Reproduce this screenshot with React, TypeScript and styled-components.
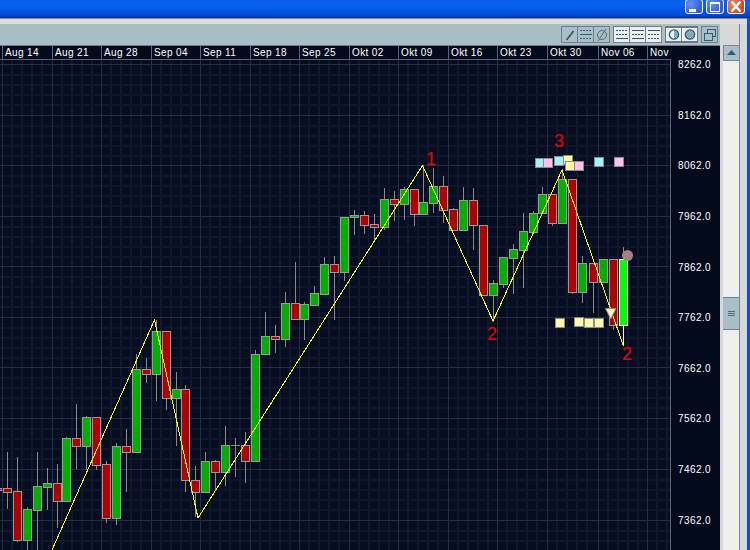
import React from "react";
import styled, { createGlobalStyle } from "styled-components";

const Global = createGlobalStyle`
  html, body { margin: 0; padding: 0; background: #dcdcdc; overflow: hidden; }
  * { box-sizing: border-box; }
`;

const Page = styled.div`
  width: 750px;
  height: 550px;
  display: flex;
  flex-direction: column;
  overflow: hidden;
  font-family: "Liberation Sans", Arial, sans-serif;
`;

const TitleBar = styled.div`
  height: 18px;
  flex: none;
  display: flex;
  justify-content: flex-end;
  align-items: flex-start;
  gap: 3px;
  padding-right: 5px;
  background: linear-gradient(180deg, #0a5ee8 0%, #0462f0 30%, #0050d8 75%, #0048c8 88%, #00309a 100%);
`;

const WinButton = styled.div<{ $close?: boolean }>`
  width: 18px;
  height: 15px;
  margin-top: -1px;
  border: 1px solid #fff;
  border-radius: 3px;
  display: flex;
  align-items: center;
  justify-content: center;
  background: ${(p) =>
    p.$close
      ? "radial-gradient(circle at 30% 30%, #ee8a60, #d8481c 70%)"
      : "radial-gradient(circle at 30% 30%, #6a90f0, #2f5fe0 70%)"};
`;

const Frame = styled.div`
  flex: 1;
  min-height: 0;
  display: flex;
  border-right: 3px solid #0a50e0;
  padding-top: 6px;
  background: linear-gradient(180deg, #8a8a8a 0, #8a8a8a 1px, #dfdcdc 1px, #dfdcdc 6px, #d8d8d8 6px);
`;

const MainColumn = styled.div`
  width: 720px;
  flex: none;
  display: flex;
  flex-direction: column;
`;

const Toolbar = styled.div`
  height: 22px;
  flex: none;
  display: flex;
  justify-content: flex-end;
  align-items: flex-start;
  gap: 3px;
  padding: 2px 2px 0 0;
  background: #a9bfc5;
  border-bottom: 1px solid #6f7d8c;
`;

const ToolGroup = styled.div<{ $thick?: boolean; $w: number }>`
  display: flex;
  width: ${(p) => p.$w}px;
  height: 17px;
  border: ${(p) => (p.$thick ? "2px solid #6a7888" : "1px solid #6f7d8c")};
  ${(p) => p.$thick && "border-left-width: 1px; border-right-width: 1px;"}
`;

const ToolButton = styled.div<{ $lit?: boolean }>`
  flex: 1;
  min-width: 0;
  height: 100%;
  display: flex;
  align-items: center;
  justify-content: center;
  background: ${(p) => (p.$lit ? "#eeeeee" : "#a9bfc5")};
  border-left: 1px solid #6f7d8c;
  &:first-child { border-left: 0; }
`;

const DateAxis = styled.div`
  height: 13px;
  flex: none;
  display: flex;
  background: #030a1c;
  padding-left: 2px;
  overflow: hidden;
`;

const DateCell = styled.div<{ $w: number }>`
  width: ${(p) => p.$w}px;
  flex: none;
  border-left: 1px solid #5a6678;
  padding-left: 2px;
  color: #fff;
  font-size: 10px;
  line-height: 13px;
  letter-spacing: 0.35px;
  white-space: nowrap;
`;

const ChartRow = styled.div`
  flex: 1;
  min-height: 0;
  display: flex;
  background: #020a1c;
`;

const ChartBox = styled.div`
  width: 671px;
  flex: none;
  border-top: 1px solid #5a6678;
  border-right: 1px solid #5a6678;
  display: flex;
  overflow: hidden;
`;

const PriceAxis = styled.div`
  flex: 1;
  display: flex;
  flex-direction: column;
  padding: 0 0 0 7px;
  margin-right: 1px;
  color: #fff;
  font-size: 10px;
  letter-spacing: 0.42px;
`;

const PriceLabel = styled.div`
  height: 50.65px;
  flex: none;
  line-height: 11px;
  white-space: nowrap;
`;

const ScrollColumn = styled.div`
  width: 17px;
  flex: none;
  margin-left: 3px;
  padding-top: 21px;
  display: flex;
  flex-direction: column;
  border-right: 1px solid #7a8896;
`;

const ScrollArrow = styled.div`
  height: 16px;
  flex: none;
  background: #a9bfc5;
  border: 1px solid #7a8896;
  border-right: 0;
  display: flex;
  align-items: center;
  justify-content: center;
`;

const ScrollTrack = styled.div`
  flex: 1;
  background: #efefef;
  padding-top: 236px;
`;

const ScrollThumb = styled.div`
  height: 33px;
  background: #a9bfc5;
  border-top: 1px solid #6f7d8c;
  border-bottom: 1px solid #6f7d8c;
  display: flex;
  flex-direction: column;
  align-items: center;
  justify-content: center;
  gap: 1px;
`;

const GripLine = styled.div`
  width: 7px;
  height: 1px;
  background: #4f6a80;
`;

type C = [number, number, number, number, number, "r" | "g" | "b"];
const candles: C[] = [
  [-3, 480, 500, 488, 490, "r"],
  [7, 452, 509, 488, 492, "r"],
  [17, 457, 542, 491, 540, "r"],
  [27, 507, 560, 509, 540, "g"],
  [37, 452, 560, 486, 510, "g"],
  [47, 468, 510, 483, 487, "g"],
  [57, 464, 528, 483, 501, "r"],
  [66, 437, 501, 438, 501, "g"],
  [76, 404, 469, 438, 446, "r"],
  [86, 416, 470, 417, 446, "g"],
  [96, 417, 470, 417, 465, "r"],
  [106, 461, 523, 464, 518, "r"],
  [116, 443, 525, 446, 518, "g"],
  [126, 429, 492, 446, 452, "r"],
  [136, 354, 452, 369, 452, "g"],
  [146, 358, 383, 369, 374, "r"],
  [156, 320, 401, 331, 374, "g"],
  [166, 331, 410, 331, 398, "r"],
  [176, 372, 446, 389, 398, "g"],
  [185, 385, 492, 389, 480, "r"],
  [195, 466, 517, 480, 492, "r"],
  [205, 452, 492, 461, 492, "g"],
  [215, 460, 490, 461, 472, "r"],
  [225, 426, 486, 445, 472, "g"],
  [245, 432, 483, 445, 461, "r"],
  [255, 350, 461, 354, 461, "g"],
  [265, 312, 354, 336, 354, "g"],
  [275, 325, 353, 336, 339, "r"],
  [285, 292, 347, 303, 339, "g"],
  [295, 262, 320, 303, 319, "r"],
  [304, 302, 340, 304, 319, "g"],
  [314, 286, 305, 293, 305, "g"],
  [324, 257, 294, 264, 294, "g"],
  [334, 256, 320, 264, 272, "r"],
  [344, 217, 281, 217, 272, "g"],
  [354, 210, 235, 215, 217, "g"],
  [364, 211, 234, 215, 225, "r"],
  [374, 214, 240, 224, 227, "r"],
  [384, 188, 230, 199, 227, "g"],
  [394, 191, 221, 199, 204, "r"],
  [404, 187, 220, 189, 204, "g"],
  [414, 189, 226, 189, 214, "r"],
  [423, 165, 214, 202, 214, "g"],
  [433, 168, 213, 186, 203, "g"],
  [443, 176, 223, 186, 210, "r"],
  [453, 208, 230, 209, 230, "r"],
  [463, 187, 230, 200, 230, "g"],
  [473, 188, 250, 200, 225, "r"],
  [483, 225, 295, 225, 295, "r"],
  [493, 280, 322, 283, 295, "g"],
  [503, 257, 288, 257, 284, "g"],
  [513, 244, 294, 249, 258, "g"],
  [523, 213, 288, 231, 250, "g"],
  [533, 211, 232, 213, 232, "g"],
  [542, 187, 213, 194, 213, "g"],
  [552, 194, 226, 194, 223, "r"],
  [562, 169, 223, 179, 223, "g"],
  [572, 179, 294, 179, 292, "r"],
  [582, 256, 303, 263, 292, "g"],
  [593, 263, 313, 263, 282, "r"],
  [603, 259, 282, 259, 282, "g"],
  [613, 259, 330, 259, 325, "r"],
  [623, 247, 345, 259, 325, "b"],
];

const fills = { r: "#b00000", g: "#00b000", b: "#00ff00" };

const weeks = [2, 52, 101, 151, 200, 250, 299, 349, 398, 448, 497, 547, 598, 647];
const dates: [string, number][] = [
  ["Aug 14", 50], ["Aug 21", 49], ["Aug 28", 50], ["Sep 04", 49], ["Sep 11", 50],
  ["Sep 18", 49], ["Sep 25", 50], ["Okt 02", 49], ["Okt 09", 50], ["Okt 16", 49],
  ["Okt 23", 50], ["Okt 30", 51], ["Nov 06", 49], ["Nov", 60],
];
const prices = ["8262.0", "8162.0", "8062.0", "7962.0", "7862.0", "7762.0", "7662.0", "7562.0", "7462.0", "7362.0"];
const majorY = [64.5, 115.5, 165.5, 216.5, 266.5, 317.5, 367.5, 418.5, 469.5, 520.5];

const squares: [number, number, string][] = [
  [535, 158, "#a0f4fc"], [543, 158, "#ffc0f0"], [554, 156, "#a0f4fc"], [563, 155, "#fff8a8"],
  [565, 161, "#fff8a8"], [574, 161, "#ffc0f0"], [594, 157, "#a0f4fc"], [614, 157, "#ffc0f0"],
  [555, 318, "#fff8a8"], [574, 317, "#fff8a8"], [584, 318, "#fff8a8"], [594, 318, "#fff8a8"],
];

const labels: [string, number, number][] = [
  ["1", 431, 165], ["2", 492, 340], ["3", 559, 147], ["2", 627, 360],
];

function Grid() {
  const lines: React.ReactNode[] = [];
  for (let i = 0; i < weeks.length; i++) {
    const x0 = weeks[i];
    for (let k = 1; k < 5; k++) {
      lines.push(<rect key={`v${i}${k}`} x={Math.round(x0 + k * 9.9) - 1} y={60} width={2} height={490} fill="#0f192d" />);
    }
  }
  for (let i = 0; i < majorY.length; i++) {
    for (let k = 1; k < 5; k++) {
      lines.push(<rect key={`h${i}${k}`} x={0} y={Math.round(majorY[i] + k * 10.1) - 1} width={670} height={2} fill="#0d1729" />);
    }
  }
  weeks.forEach((x, i) => lines.push(<rect key={`V${i}`} x={Math.floor(x)} y={60} width={1} height={490} fill="#262f42" />));
  majorY.forEach((y, i) => lines.push(<rect key={`H${i}`} x={0} y={Math.floor(y)} width={670} height={1} fill="#262f42" />));
  return <g>{lines}</g>;
}

function Chart() {
  return (
    <svg width={670} height={490} viewBox="0 60 670 490" style={{ display: "block" }}>
      <rect x={0} y={60} width={670} height={490} fill="#060d21" />
      <Grid />
      <g shapeRendering="crispEdges">
        <rect x={235} y={438} width={1} height={39} fill="#8a8a8a" />
        <rect x={231} y={445} width={9} height={1} fill="#8a8a8a" />
        {candles.map(([x, wt, wb], i) => (
          <rect key={i} x={x} y={wt} width={1} height={wb - wt} fill="#8a8a8a" />
        ))}
        {candles.map(([x, , wb, t, b, c], i) => (
          <React.Fragment key={i}>
            {c === "b" && <rect x={x} y={b} width={1} height={wb - b} fill="#ffffff" />}
            <rect
              x={x - 3.5}
              y={t + 0.5}
              width={8}
              height={Math.max(b - t, 2)}
              fill={fills[c]}
              stroke={c === "b" ? "#ffffff" : "#9a9a9a"}
              strokeWidth={1}
            />
          </React.Fragment>
        ))}
      </g>
      <polyline
        points="52,550 154.5,320 198,518 422.5,165.5 493,321 562,170 623.5,346"
        fill="none"
        stroke="#ffff00"
        strokeWidth={1}
        shapeRendering="crispEdges"
      />
      <g shapeRendering="crispEdges">
        {squares.map(([x, y, f], i) => (
          <rect key={i} x={x + 0.5} y={y + 0.5} width={9} height={9} fill={f} stroke="#8c8c8c" />
        ))}
      </g>
      <polygon points="605.5,308.5 616,308.5 610.7,319" fill="#fff4b0" stroke="#8c8c8c" strokeWidth={1} />
      <circle cx={627.5} cy={255.5} r={5.5} fill="#a88080" />
      {labels.map(([t, x, y], i) => (
        <text key={i} x={x} y={y} textAnchor="middle" fill="#f00000" fontSize={18} fontFamily='"Liberation Sans", Arial, sans-serif'>
          {t}
        </text>
      ))}
    </svg>
  );
}

const ink = "#235f82";

function Lines({ rows }: { rows: ("d" | "s")[] }) {
  return (
    <svg width={14} height={13} viewBox="0 0 14 13" shapeRendering="crispEdges">
      {rows.map((r, i) => (
        <line key={i} x1={1} x2={13} y1={2.5 + i * 4} y2={2.5 + i * 4} stroke={ink} strokeWidth={1} strokeDasharray={r === "d" ? "2 1" : undefined} />
      ))}
    </svg>
  );
}

function Dither({ half }: { half?: boolean }) {
  const id = half ? "ditherA" : "ditherB";
  return (
    <svg width={14} height={13} viewBox="0 0 14 14">
      <defs>
        <pattern id={id} width={2} height={2} patternUnits="userSpaceOnUse">
          <rect width={1} height={1} fill={ink} />
          <rect x={1} y={1} width={1} height={1} fill={ink} />
        </pattern>
      </defs>
      <circle cx={7} cy={7} r={5} fill={half ? "#eeeeee" : `url(#${id})`} stroke={ink} strokeWidth={1.4} />
      {half && <path d="M7 2 A5 5 0 0 1 7 12 Z" fill={`url(#${id})`} />}
    </svg>
  );
}

export default function App() {
  return (
    <>
      <Global />
      <Page>
        <TitleBar>
          <WinButton>
            <svg width={12} height={11} viewBox="0 0 12 11"><rect x={1} y={8} width={7} height={3} fill="#fff" /></svg>
          </WinButton>
          <WinButton>
            <svg width={12} height={11} viewBox="0 0 12 11"><rect x={1.5} y={1.5} width={9} height={9} fill="none" stroke="#fff" /><rect x={1} y={1} width={10} height={2} fill="#fff" /></svg>
          </WinButton>
          <WinButton $close>
            <svg width={12} height={11} viewBox="0 0 12 11"><path d="M1.5 0.5 L10.5 10.5 M10.5 0.5 L1.5 10.5" stroke="#fff" strokeWidth={2.4} /></svg>
          </WinButton>
        </TitleBar>
        <Frame>
          <MainColumn>
            <Toolbar>
              <ToolGroup $w={49}>
                <ToolButton>
                  <svg width={14} height={14} viewBox="0 0 14 14"><line x1={3.5} y1={12} x2={10.5} y2={3} stroke="#33506a" strokeWidth={1.6} /></svg>
                </ToolButton>
                <ToolButton><Lines rows={["d", "s", "d"]} /></ToolButton>
                <ToolButton>
                  <svg width={14} height={14} viewBox="0 0 14 14"><circle cx={7} cy={7} r={4.5} fill="none" stroke="#4f6a80" /><line x1={3} y1={13} x2={11} y2={1} stroke="#4f6a80" /></svg>
                </ToolButton>
              </ToolGroup>
              <ToolGroup $w={49}>
                <ToolButton $lit><Lines rows={["d", "d", "s"]} /></ToolButton>
                <ToolButton $lit><Lines rows={["s", "d", "s"]} /></ToolButton>
                <ToolButton $lit><Lines rows={["s", "d", "d"]} /></ToolButton>
              </ToolGroup>
              <ToolGroup $thick $w={33}>
                <ToolButton $lit><Dither half /></ToolButton>
                <ToolButton $lit><Dither /></ToolButton>
              </ToolGroup>
              <ToolGroup $w={17}>
                <ToolButton>
                  <svg width={14} height={14} viewBox="0 0 14 14" shapeRendering="crispEdges">
                    <rect x={4.5} y={1.5} width={8} height={7} fill="none" stroke={ink} strokeWidth={1.4} />
                    <rect x={1.5} y={5.5} width={8} height={7} fill="#a9bfc5" stroke={ink} strokeWidth={1.4} />
                  </svg>
                </ToolButton>
              </ToolGroup>
            </Toolbar>
            <DateAxis>
              {dates.map(([d, w]) => (
                <DateCell key={d} $w={w}>{d}</DateCell>
              ))}
            </DateAxis>
            <ChartRow>
              <ChartBox><Chart /></ChartBox>
              <PriceAxis>
                {prices.map((p) => (
                  <PriceLabel key={p}>{p}</PriceLabel>
                ))}
              </PriceAxis>
            </ChartRow>
          </MainColumn>
          <ScrollColumn>
            <ScrollArrow>
              <svg width={9} height={6} viewBox="0 0 9 6"><polygon points="4.5,0 9,5 0,5" fill={ink} /></svg>
            </ScrollArrow>
            <ScrollTrack>
              <ScrollThumb>
                <GripLine /><GripLine /><GripLine />
              </ScrollThumb>
            </ScrollTrack>
          </ScrollColumn>
        </Frame>
      </Page>
    </>
  );
}
